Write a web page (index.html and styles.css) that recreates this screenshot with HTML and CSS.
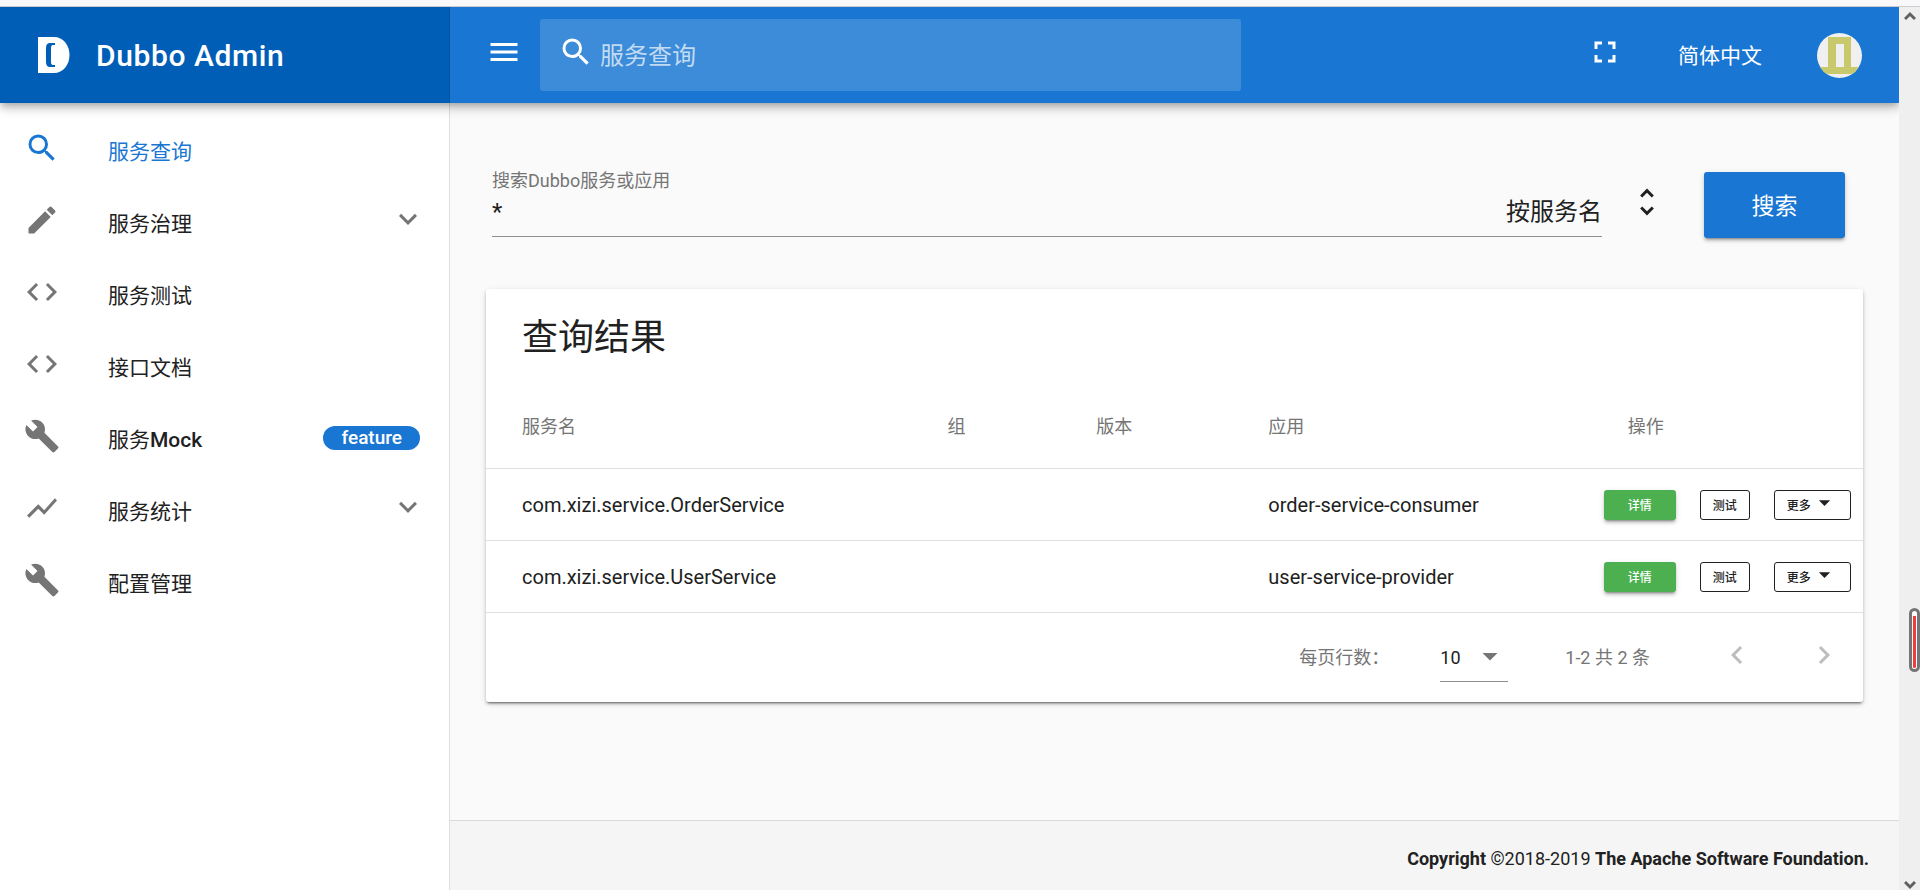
FILE: index.html
```html
<!DOCTYPE html>
<html lang="zh-CN">
<head>
<meta charset="utf-8">
<title>Dubbo Admin</title>
<link rel="stylesheet" href="styles.css">
</head>
<body>
<svg class="sprite" aria-hidden="true">
  <symbol id="search" viewBox="0 0 24 24"><path d="M15.5 14h-.79l-.28-.27A6.471 6.471 0 0 0 16 9.500 6.500 6.500 0 1 0 9.500 16c1.610 0 3.090-.59 4.230-1.570l.27.28v.79l5 4.990L20.490 19l-4.990-5zm-6 0C7.010 14 5 11.990 5 9.500S7.010 5 9.500 5 14 7.010 14 9.500 11.990 14 9.500 14z"/></symbol>
  <symbol id="edit" viewBox="0 0 24 24"><path d="M3 17.250V21h3.750L17.810 9.940l-3.750-3.750L3 17.250zM20.710 7.040a.996.996 0 0 0 0-1.410l-2.340-2.340a.996.996 0 0 0-1.410 0l-1.830 1.830 3.750 3.750 1.830-1.830z"/></symbol>
  <symbol id="code" viewBox="0 0 24 24"><path d="M9.400 16.600L4.800 12l4.600-4.600L8 6l-6 6 6 6 1.400-1.400zm5.200 0l4.600-4.600-4.600-4.600L16 6l6 6-6 6-1.400-1.400z"/></symbol>
  <symbol id="build" viewBox="0 0 24 24"><path d="M22.700 19l-9.100-9.100c.9-2.300.4-5-1.500-6.900-2-2-5-2.400-7.400-1.300L9 6 6 9 1.600 4.700C.4 7.100.9 10.100 2.900 12.100c1.900 1.900 4.600 2.400 6.900 1.500l9.100 9.100c.4.400 1 .4 1.400 0l2.300-2.300c.5-.4.5-1.100.1-1.400z"/></symbol>
  <symbol id="chart" viewBox="0 0 24 24"><path d="M3.500 18.490l6-6.010 4 4L22 6.920l-1.410-1.410-7.090 7.970-4-4L2 16.990z"/></symbol>
  <symbol id="down" viewBox="0 0 24 24"><path d="M7.410 7.840L12 12.420l4.590-4.580L18 9.250l-6 6-6-6z"/></symbol>
  <symbol id="menu" viewBox="0 0 24 24"><path d="M3 18h18v-2H3v2zm0-5h18v-2H3v2zm0-7v2h18V6H3z"/></symbol>
  <symbol id="fullscreen" viewBox="0 0 24 24"><path d="M7 14H5v5h5v-2H7v-3zm-2-4h2V7h3V5H5v5zm12 7h-3v2h5v-5h-2v3zM14 5v2h3v3h2V5h-5z"/></symbol>
  <symbol id="unfold" viewBox="0 0 24 24"><path d="M12 5.830L15.170 9l1.410-1.410L12 3 7.410 7.590 8.830 9 12 5.830zm0 12.340L8.830 15l-1.410 1.410L12 21l4.590-4.590L15.170 15 12 18.170z"/></symbol>
  <symbol id="caret" viewBox="0 0 24 24"><path d="M7 10l5 5 5-5z"/></symbol>
  <symbol id="left" viewBox="0 0 24 24"><path d="M15.410 7.410L14 6l-6 6 6 6 1.410-1.410L10.830 12z"/></symbol>
  <symbol id="right" viewBox="0 0 24 24"><path d="M10 6L8.590 7.410 13.170 12l-4.580 4.590L10 18l6-6z"/></symbol>
</svg>

<div class="strip"></div>
<div class="shell">
  <div class="page">
    <header class="header">
      <div class="brand">
        <svg class="logo" viewBox="0 0 32 36" aria-hidden="true">
          <path fill="#fff" d="M0 0h16c9 0 15.500 8 15.500 18s-6.500 18-15.500 18H0z"/>
          <path fill="#005eb7" d="M17 6h-5q-4 0-4 5v14q0 5 4 5h5v-2h-2q-2 0-2-3V11q0-3 2-3h2z"/>
        </svg>
        <span class="brand-name">Dubbo Admin</span>
      </div>
      <div class="toolbar">
        <button class="icon-button" type="button" aria-label="菜单"><svg class="icon"><use href="#menu"/></svg></button>
        <label class="quick-search">
          <svg class="icon"><use href="#search"/></svg>
          <input type="text" placeholder="服务查询" aria-label="服务查询">
        </label>
        <div class="tools">
          <button class="icon-button" type="button" aria-label="全屏"><svg class="icon"><use href="#fullscreen"/></svg></button>
          <button class="language" type="button">简体中文</button>
          <button class="avatar" type="button" aria-label="用户">
            <svg viewBox="0 0 45 45"><path fill="#c8c96d" fill-rule="evenodd" d="M11 4h23v30h11v7H0v-7h11zM19 11v23h8V11z"/></svg>
          </button>
        </div>
      </div>
    </header>

    <nav class="side">
      <a class="item active" href="#"><svg class="icon"><use href="#search"/></svg><span class="item-text">服务查询</span></a>
      <a class="item" href="#"><svg class="icon"><use href="#edit"/></svg><span class="item-text">服务治理</span><svg class="icon"><use href="#down"/></svg></a>
      <a class="item" href="#"><svg class="icon"><use href="#code"/></svg><span class="item-text">服务测试</span></a>
      <a class="item" href="#"><svg class="icon"><use href="#code"/></svg><span class="item-text">接口文档</span></a>
      <a class="item" href="#"><svg class="icon"><use href="#build"/></svg><span class="item-text">服务<b>Mock</b></span><span class="badge">feature</span></a>
      <a class="item" href="#"><svg class="icon"><use href="#chart"/></svg><span class="item-text">服务统计</span><svg class="icon"><use href="#down"/></svg></a>
      <a class="item" href="#"><svg class="icon"><use href="#build"/></svg><span class="item-text">配置管理</span></a>
    </nav>

    <main class="main">
      <form class="search-form">
        <div class="field">
          <label for="keyword">搜索Dubbo服务或应用</label>
          <div class="field-row">
            <input id="keyword" type="text" value="*">
            <select aria-label="查询方式"><option>按服务名</option></select>
          </div>
        </div>
        <svg class="icon unfold"><use href="#unfold"/></svg>
        <button class="submit" type="button">搜索</button>
      </form>

      <section class="card">
        <h2>查询结果</h2>
        <table>
          <thead>
            <tr><th class="c-name">服务名</th><th class="c-group">组</th><th class="c-version">版本</th><th class="c-app">应用</th><th>操作</th></tr>
          </thead>
          <tbody>
            <tr>
              <td>com.xizi.service.OrderService</td><td></td><td></td><td>order-service-consumer</td>
              <td class="actions"><div class="buttons"><button class="detail" type="button">详情</button><button class="outline" type="button">测试</button><button class="outline more" type="button">更多<svg><use href="#caret"/></svg></button></div></td>
            </tr>
            <tr>
              <td>com.xizi.service.UserService</td><td></td><td></td><td>user-service-provider</td>
              <td class="actions"><div class="buttons"><button class="detail" type="button">详情</button><button class="outline" type="button">测试</button><button class="outline more" type="button">更多<svg><use href="#caret"/></svg></button></div></td>
            </tr>
          </tbody>
        </table>
        <div class="pager">
          <label for="rows">每页行数：</label>
          <div class="rows">
            <select id="rows"><option>10</option></select>
            <svg class="icon"><use href="#caret"/></svg>
          </div>
          <span class="range">1-2 共 2 条</span>
          <button class="icon-button" type="button" disabled aria-label="上一页"><svg class="icon"><use href="#left"/></svg></button>
          <button class="icon-button next" type="button" disabled aria-label="下一页"><svg class="icon"><use href="#right"/></svg></button>
        </div>
      </section>

      <footer class="footer"><b>Copyright</b> ©2018-2019 <b>The Apache Software Foundation.</b></footer>
    </main>
  </div>
  <div class="scrollbar" aria-hidden="true">
    <svg class="arrow" viewBox="0 0 12 10"><path d="M1 8l5-5 5 5"/></svg>
    <div class="marker"></div>
    <svg class="arrow" viewBox="0 0 12 10"><path d="M1 2l5 5 5-5"/></svg>
  </div>
</div>
</body>
</html>
```
FILE: styles.css
```css
* { box-sizing: border-box; }

body {
  margin: 0;
  height: 100vh;
  display: flex;
  flex-direction: column;
  overflow: hidden;
  font-family: Roboto, "Noto Sans CJK SC", sans-serif;
  font-size: 18px;
  color: #212121;
  background: #fafafa;
}

button, input, select {
  margin: 0;
  padding: 0;
  border: 0;
  outline: 0;
  font: inherit;
  color: inherit;
  background: none;
  appearance: none;
}

.sprite { display: none; }

.icon {
  display: block;
  flex: none;
  width: 36px;
  height: 36px;
  fill: currentColor;
}

.icon-button { flex: none; }

.strip {
  flex: none;
  height: 7px;
  background: #f9f9fb;
  border-bottom: 1px solid #ccc;
}

.shell {
  flex: 1;
  min-height: 0;
  display: flex;
}

.page {
  flex: 1;
  min-width: 0;
  display: grid;
  grid-template: auto 1fr / 450px 1fr;
  overflow: hidden;
}

/* header */
.header {
  grid-column: 1 / -1;
  z-index: 1;
  display: flex;
  height: 96px;
  color: #fff;
  background: #1976d2;
  box-shadow: 0 3px 6px -2px rgba(0, 0, 0, .2), 0 6px 8px 0 rgba(0, 0, 0, .14), 0 2px 15px 0 rgba(0, 0, 0, .12);
}

.brand {
  flex: none;
  width: 450px;
  display: flex;
  align-items: center;
  gap: 26px;
  padding-left: 38px;
  background: #005eb7;
  border-right: 1px solid #0053a1;
}

.logo { width: 32px; height: 36px; }

.brand-name {
  font-size: 30px;
  font-weight: 500;
  letter-spacing: .02em;
}

.toolbar {
  flex: 1;
  display: flex;
  align-items: center;
  gap: 18px;
  padding: 0 37px 0 36px;
}

.toolbar .icon { margin-bottom: 6px; }

.quick-search {
  flex: 0 1 701px;
  display: flex;
  align-items: center;
  gap: 6px;
  height: 72px;
  padding: 0 18px;
  border-radius: 3px;
  background: rgba(255, 255, 255, .16);
}

.quick-search input {
  flex: 1;
  min-width: 0;
  padding-top: 2px;
  font-size: 24px;
}

.quick-search input::placeholder { color: rgba(255, 255, 255, .7); opacity: 1; }

.tools {
  display: flex;
  align-items: center;
  gap: 55px;
  margin-left: auto;
}

.language { padding-bottom: 3px; font-size: 21px; }

.avatar {
  width: 45px;
  height: 45px;
  border-radius: 50%;
  overflow: hidden;
  background: #f0f0f0;
}

.avatar svg { display: block; }

/* side navigation */
.side {
  padding: 12px 0;
  background: #fff;
  border-right: 1px solid #e0e0e0;
}

.item {
  display: flex;
  align-items: center;
  gap: 48px;
  height: 72px;
  padding: 0 23px 2px 24px;
  font-size: 21px;
  color: #212121;
  text-decoration: none;
}

.item .icon { margin-bottom: 4px; color: #757575; }
.item.active, .item.active .icon { color: #1976d2; }
.item-text { flex: 1; }
.item b { font-weight: 500; }

.badge {
  margin-right: 6px;
  padding: 0 18px;
  border-radius: 12px;
  font-weight: 500;
  font-size: 19px;
  line-height: 24px;
  color: #fff;
  background: #1976d2;
}

/* content */
.main {
  display: flex;
  flex-direction: column;
  min-width: 0;
}

.search-form {
  display: flex;
  align-items: flex-start;
  padding: 66px 54px 51px 42px;
}

.field {
  flex: 1;
  min-width: 0;
  border-bottom: 1px solid #8f8f8f;
}

.field label {
  display: block;
  line-height: 24px;
  color: #757575;
}

.field-row {
  display: flex;
  height: 43px;
  font-size: 24px;
  padding-bottom: 6px;
}

.field-row input { flex: 1; min-width: 0; }

.unfold { margin: 15px 39px 0 27px; }

.submit {
  margin-top: 3px;
  padding-bottom: 3px;
  width: 141px;
  height: 66px;
  border-radius: 3px;
  font-size: 23px;
  color: #fff;
  background: #1976d2;
}

.submit, .detail {
  box-shadow: 0 3px 2px -2px rgba(0, 0, 0, .3), 0 3px 3px 0 rgba(0, 0, 0, .14), 0 2px 6px 0 rgba(0, 0, 0, .12);
}

.card {
  margin: 0 36px;
  border-radius: 3px;
  background: #fff;
  box-shadow: 0 3px 2px -2px rgba(0, 0, 0, .4), 0 2px 3px 0 rgba(0, 0, 0, .2), 0 2px 6px 0 rgba(0, 0, 0, .12);
}

.card h2 {
  margin: 0;
  padding: 25px 36px 23px;
  font-size: 36px;
  font-weight: 400;
  line-height: 48px;
}

table {
  width: 100%;
  table-layout: fixed;
  border-spacing: 0;
}

th, td {
  padding: 0 0 0 36px;
  text-align: left;
  border-bottom: 1px solid #e0e0e0;
}

th {
  height: 84px;
  padding-bottom: 3px;
  font-weight: 400;
  color: #757575;
}

td { height: 72px; font-size: 20px; }

.c-name { width: 30.9%; }
.c-group { width: 10.8%; }
.c-version { width: 12.5%; }
.c-app { width: 26.1%; }

td.actions { padding-left: 12px; }

.buttons { display: flex; gap: 24px; }

.detail, .outline {
  height: 30px;
  border-radius: 3px;
  font-size: 12px;
  font-weight: 500;
}

.detail { width: 72px; color: #fff; background: #4caf50; }
.outline { width: 50px; border: 1px solid #212121; }

.more {
  width: 77px;
  display: flex;
  align-items: center;
  justify-content: center;
}

.more svg { width: 27px; height: 27px; fill: currentColor; margin-bottom: 4px; }

.pager {
  display: flex;
  align-items: center;
  justify-content: flex-end;
  height: 89px;
  padding: 0 21px 3px 0;
  color: #757575;
}

.pager .icon-button { color: #bdbdbd; }
.pager .icon-button .icon { margin-bottom: 3px; }

.rows {
  display: flex;
  align-items: center;
  width: 68px;
  height: 48px;
  margin: 4px 57px 0 51px;
  border-bottom: 1px solid #8f8f8f;
}

.rows select { width: 33px; color: #212121; }
.rows .icon { margin-bottom: 4px; }

.range { margin-right: 69px; }
.next { margin-left: 51px; }

.footer {
  margin-top: auto;
  padding: 24px 30px 0;
  height: 70px;
  line-height: 28px;
  text-align: right;
  background: #f5f5f5;
  border-top: 1px solid #dadada;
}

.footer b { font-weight: 700; }

/* window scroll bar */
.scrollbar {
  flex: none;
  width: 21px;
  display: flex;
  flex-direction: column;
  align-items: center;
  justify-content: space-between;
  padding-top: 4px;
  position: relative;
  background: #efefef;
}

.arrow {
  width: 12px;
  height: 10px;
  fill: none;
  stroke: #606060;
  stroke-width: 3;
}

.marker {
  position: absolute;
  right: 0;
  top: 601px;
  width: 11px;
  height: 64px;
  padding: 5px 1px 1px;
  border: 3px solid #757575;
  border-radius: 6px;
  background: #f03c3c content-box;
  box-shadow: inset 0 0 0 6px #fff;
}

.marker { box-shadow: none; background: linear-gradient(#f03c3c, #f03c3c) content-box, #fff; }
```
